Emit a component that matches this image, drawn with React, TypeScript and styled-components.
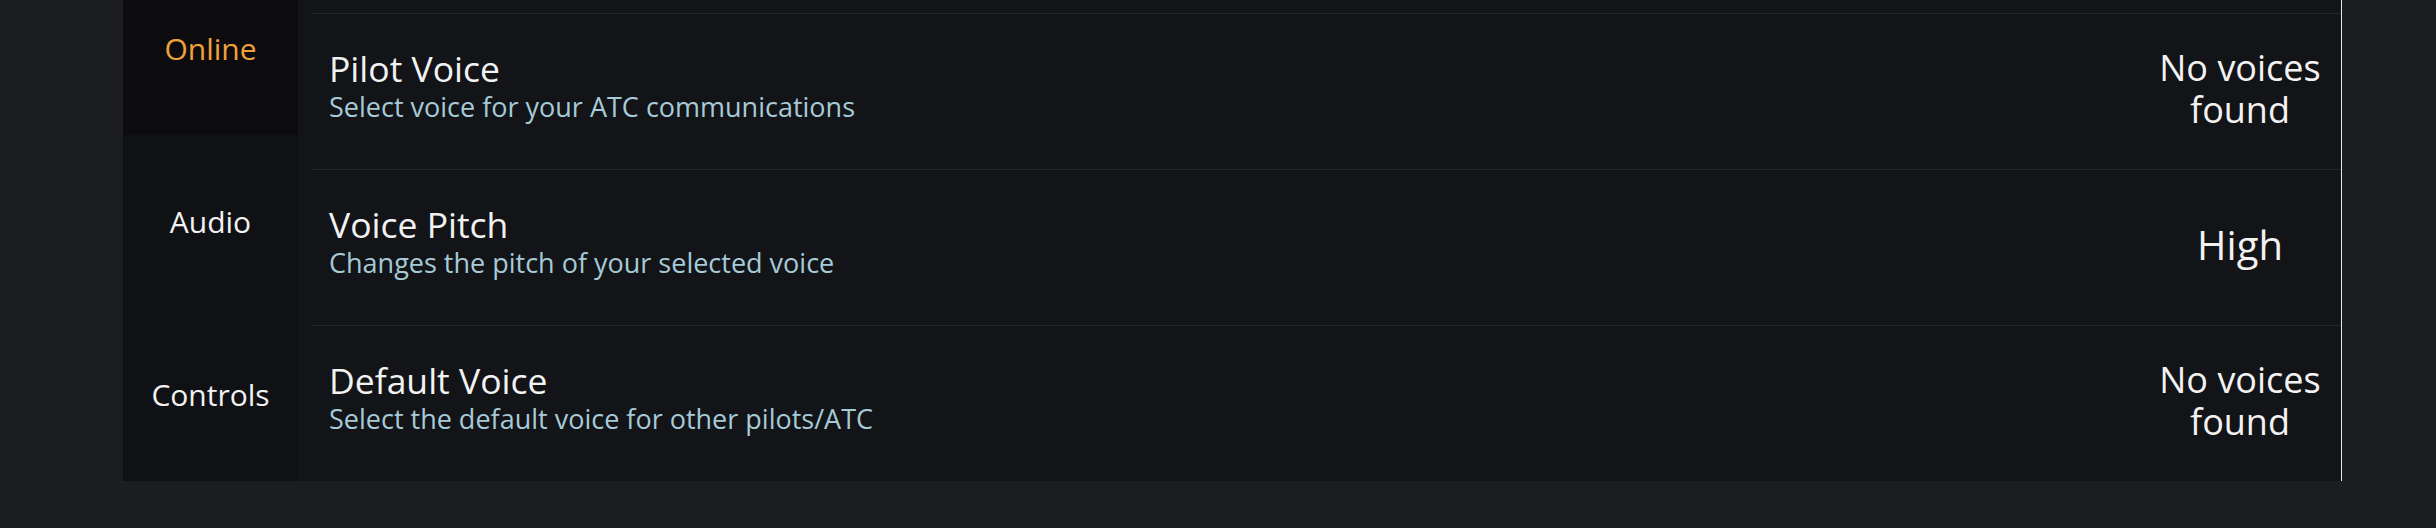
import styled, { createGlobalStyle } from "styled-components";

// 설정 패널 (Online 탭)

const GlobalStyle = createGlobalStyle`
  body {
    margin: 0;
    background-color: #1b1d21;
    overflow: hidden;
  }
  * {
    box-sizing: border-box;
  }
`;

type Setting = {
  title: string;
  description: string;
  value: string;
  large?: boolean;
};

const tabs = ["Online", "Audio", "Controls"];

const settings: Setting[] = [
  {
    title: "Pilot Voice",
    description: "Select voice for your ATC communications",
    value: "No voices found",
  },
  {
    title: "Voice Pitch",
    description: "Changes the pitch of your selected voice",
    value: "High",
    large: true,
  },
  {
    title: "Default Voice",
    description: "Select the default voice for other pilots/ATC",
    value: "No voices found",
  },
];

const App = () => {
  return (
    <>
      <GlobalStyle />
      <Page>
        <Panel>
          <Sidebar>
            {tabs.map((tab, i) => (
              <Tab key={tab} $active={i === 0}>
                {tab}
              </Tab>
            ))}
          </Sidebar>
          <Content>
            {settings.map((item) => (
              <Row key={item.title}>
                <Info>
                  <Title>{item.title}</Title>
                  <Description>{item.description}</Description>
                </Info>
                <Value $large={item.large}>{item.value}</Value>
              </Row>
            ))}
          </Content>
        </Panel>
      </Page>
    </>
  );
};

const Page = styled.div`
  height: 528px;
  overflow: hidden;
  padding-left: 123px;
  font-family: "Open Sans", Lato, sans-serif;
`;
// 스크롤된 상태라 위쪽이 잘려 보임
const Panel = styled.div`
  display: flex;
  width: 2219px;
  margin-top: -38px;
`;
const Sidebar = styled.div`
  width: 175px;
  flex-shrink: 0;
  background-color: #101114;
  display: flex;
  flex-direction: column;
`;
const Tab = styled.div<{ $active?: boolean }>`
  height: 173px;
  display: flex;
  align-items: center;
  justify-content: center;
  font-size: 30px;
  color: ${(props) => (props.$active ? "#f0a13c" : "#f2f2f2")};
  background-color: ${(props) => (props.$active ? "#0c0c0e" : "transparent")};
`;
const Content = styled.div`
  flex: 1;
  background-color: #131418;
  border-right: 1px solid #e6e6e6;
  padding-top: 51px;
`;
const Row = styled.div`
  height: 156px;
  margin-left: 15px;
  border-top: 1px solid #25272b;
  display: flex;
  align-items: center;
  padding: 0 0 6px 16px;
`;
const Info = styled.div`
  flex: 1;
  display: flex;
  flex-direction: column;
  margin-bottom: 5px;
`;
const Title = styled.div`
  font-size: 35.5px;
  line-height: 42px;
  color: #f2f2f2;
`;
const Description = styled.div`
  font-size: 27px;
  line-height: 36px;
  color: #a6cad7;
`;
const Value = styled.div<{ $large?: boolean }>`
  width: 202px;
  text-align: center;
  font-size: ${(props) => (props.$large ? "40px" : "36px")};
  line-height: 42px;
  color: #f2f2f2;
`;

export default App;
